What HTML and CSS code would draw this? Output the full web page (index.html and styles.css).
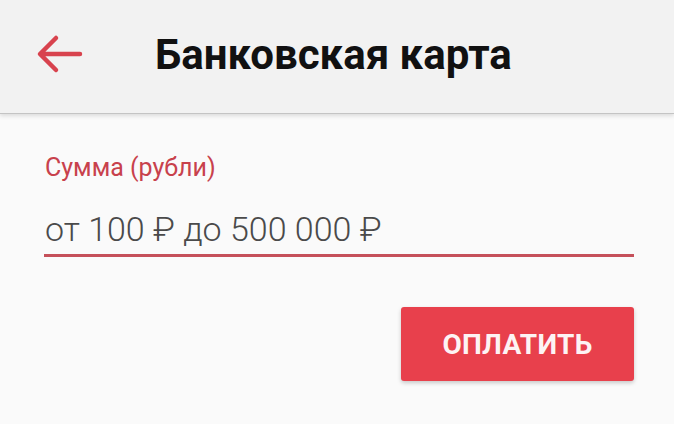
FILE: index.html
```html
<!DOCTYPE html>
<html lang="ru">
<head>
<meta charset="utf-8">
<link rel="stylesheet" href="styles.css">
</head>
<body>
<header class="bar">
  <svg class="back" width="48" height="44" viewBox="0 0 48 44">
    <path d="M44 21H6 M20 5 L4 21 L20 37" fill="none" stroke="#d8434e" stroke-width="4.5" stroke-linecap="round" stroke-linejoin="round"/>
  </svg>
  <h1 class="title">Банковская карта</h1>
</header>
<main class="content">
  <label class="label">Сумма (рубли)</label>
  <div class="field">от 100 ₽ до 500 000 ₽</div>
  <div class="actions">
    <button class="pay">ОПЛАТИТЬ</button>
  </div>
</main>
</body>
</html>
```
FILE: styles.css
```css
html, body {
  margin: 0;
  padding: 0;
  width: 674px;
  height: 424px;
  overflow: hidden;
  background: #fafafa;
  font-family: Roboto, "Noto Sans", sans-serif;
}
.bar {
  height: 114px;
  box-sizing: border-box;
  background: #f2f2f2;
  border-bottom: 1px solid #c4c4c4;
  box-shadow: 0 2px 4px rgba(0,0,0,0.12);
  display: flex;
  align-items: center;
  padding-left: 36px;
  padding-bottom: 4px;
}
.back {
  display: block;
  flex: none;
}
.title {
  margin: 0 0 0 71px;
  font-size: 42px;
  font-weight: 700;
  color: #111;
  letter-spacing: 0;
}
.content {
  padding: 39px 40px 0 44px;
  display: flex;
  flex-direction: column;
}
.label {
  font-size: 25px;
  color: #c8414c;
  line-height: 30px;
  padding-left: 1px;
}
.field {
  margin-top: 26px;
  font-size: 34px;
  font-weight: 300;
  color: #4a4a4a;
  line-height: 40px;
  padding-left: 1px;
  padding-bottom: 5px;
  border-bottom: 3px solid #c5505a;
}
.actions {
  display: flex;
  justify-content: flex-end;
  margin-top: 50px;
}
.pay {
  width: 233px;
  height: 74px;
  border: none;
  border-radius: 3px;
  background: #e8404c;
  color: #fdf3f4;
  font-family: Roboto, sans-serif;
  font-size: 28px;
  font-weight: 700;
  letter-spacing: 0.3px;
  box-shadow: 0 2px 4px rgba(0,0,0,0.2);
}
```
